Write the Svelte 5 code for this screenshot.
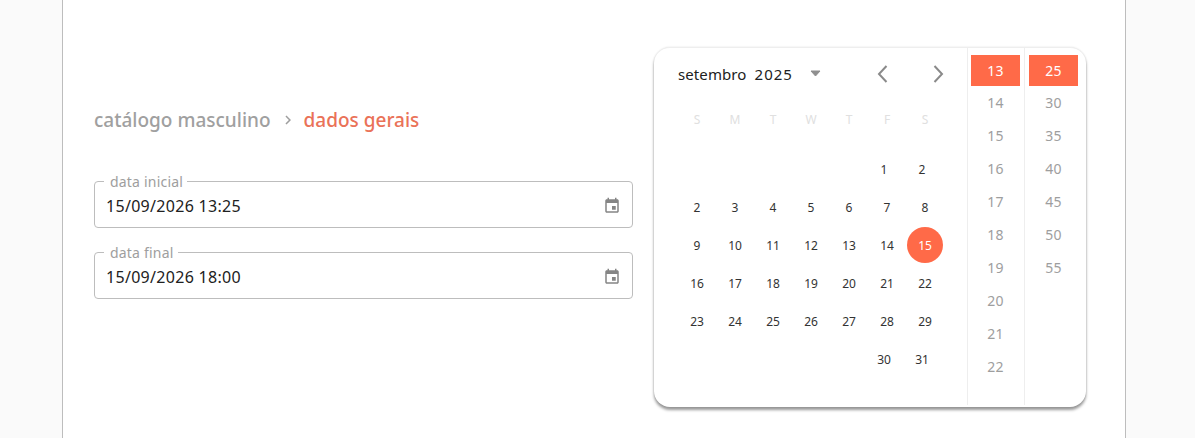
<script>
  const weekdays = ['S', 'M', 'T', 'W', 'T', 'F', 'S']
  const rows = [
    { shifted: true, days: ['', '', '', '', '', 1, 2] },
    { days: [2, 3, 4, 5, 6, 7, 8] },
    { days: [9, 10, 11, 12, 13, 14, 15] },
    { days: [16, 17, 18, 19, 20, 21, 22] },
    { days: [23, 24, 25, 26, 27, 28, 29] },
    { shifted: true, days: ['', '', '', '', '', 30, 31] }
  ]
  const hours = [13, 14, 15, 16, 17, 18, 19, 20, 21, 22]
  const minutes = [25, 30, 35, 40, 45, 50, 55]
  const fields = [
    { label: 'data inicial', value: '15/09/2026 13:25' },
    { label: 'data final', value: '15/09/2026 18:00' }
  ]
</script>

<div class="page">
  <div class="sheet">
    <div class="form">
      <div class="crumbs">
        <span>catálogo masculino</span>
        <svg class="sep" viewBox="0 0 24 24" width="18" height="18"><path d="M10 6 8.6 7.4 13.2 12l-4.6 4.6L10 18l6-6z" /></svg>
        <span class="current">dados gerais</span>
      </div>
      {#each fields as field}
        <fieldset class="field">
          <legend>{field.label}</legend>
          <span class="value">{field.value}</span>
          <svg class="cal" viewBox="0 0 24 24" width="18" height="18"><path d="M17 12h-5v5h5v-5zM16 1v2H8V1H6v2H5c-1.11 0-1.99.9-1.99 2L3 19c0 1.1.89 2 2 2h14c1.1 0 2-.9 2-2V5c0-1.1-.9-2-2-2h-1V1h-2zm3 18H5V8h14v11z" /></svg>
        </fieldset>
      {/each}
    </div>

    <div class="picker">
      <div class="month">
        <div class="head">
          <span class="title">setembro</span>
          <span class="title year">2025</span>
          <svg class="caret" viewBox="0 0 11 7" width="11" height="7"><path d="M1 1h9L5.500 6z" /></svg>
          <svg class="prev" viewBox="0 0 24 24" width="24" height="24"><path d="M16.500 4 9 12l7.500 8" /></svg>
          <svg class="next" viewBox="0 0 24 24" width="24" height="24"><path d="M7.500 4 15 12l-7.500 8" /></svg>
        </div>
        <div class="row labels">
          {#each weekdays as d}
            <span class="cell">{d}</span>
          {/each}
        </div>
        {#each rows as row}
          <div class="row" class:shifted={row.shifted}>
            {#each row.days as d}
              <span class="cell" class:selected={d === 15}>{d}</span>
            {/each}
          </div>
        {/each}
      </div>
      <div class="col hours">
        {#each hours as h, i}
          <span class="time" class:on={i === 0}>{h}</span>
        {/each}
      </div>
      <div class="col minutes">
        {#each minutes as m, i}
          <span class="time" class:on={i === 0}>{m}</span>
        {/each}
      </div>
    </div>
  </div>
</div>

<style>
  :global(body) {
    background: #fafafa;
  }
  .page {
    height: 438px;
    overflow: hidden;
    padding: 0 69px 0 62px;
    font-family: "Noto Sans", "Open Sans", sans-serif;
  }
  .sheet {
    box-sizing: border-box;
    height: 438px;
    width: 1064px;
    display: flex;
    align-items: flex-start;
    padding: 47px 39px 0 31px;
    background: #fff;
    border-left: 1px solid #bdbdbd;
    border-right: 1px solid #bdbdbd;
  }
  .form {
    width: 539px;
    margin-right: 21px;
    padding-top: 58px;
  }
  .crumbs {
    display: flex;
    align-items: center;
    height: 29px;
    margin-bottom: 41px;
    font-size: 19px;
    font-weight: 500;
    color: #a0a0a0;
  }
  .sep {
    margin: 0 7px 0 8px;
    fill: #9e9e9e;
  }
  .current {
    color: #ea7258;
  }
  .field {
    box-sizing: border-box;
    height: 53px;
    margin: 0 0 18px;
    padding: 0 11px 4px;
    display: flex;
    align-items: center;
    justify-content: space-between;
    border: 1px solid #bdbdbd;
    border-radius: 4px;
  }
  legend {
    margin-left: -2px;
    padding: 0 4px 0 6px;
    font-size: 14px;
    line-height: 13px;
    letter-spacing: 0.2px;
    color: #9e9e9e;
  }
  .value {
    font-size: 16px;
    letter-spacing: 0.3px;
    color: #212121;
  }
  .cal {
    fill: #858585;
  }
  .picker {
    box-sizing: border-box;
    width: 432px;
    height: 360px;
    display: flex;
    background: #fff;
    border-radius: 16px;
    border-top: 1px solid #eee;
    box-shadow: 0 3px 3px rgba(0, 0, 0, 0.4), 0 0 2px rgba(0, 0, 0, 0.12);
  }
  .month {
    width: 313px;
    padding: 0 0 0 24px;
    box-sizing: border-box;
  }
  .head {
    display: flex;
    align-items: center;
    height: 52px;
    padding-bottom: 1px;
    box-sizing: border-box;
    font-size: 15px;
    color: #212121;
  }
  .title {
    letter-spacing: 0.1px;
  }
  .year {
    margin-left: 8px;
    letter-spacing: 1px;
  }
  .caret {
    margin-left: 17px;
    fill: #8f8f8f;
    stroke: #8f8f8f;
    stroke-linejoin: round;
  }
  .prev,
  .next {
    fill: none;
    stroke: #8a8a8a;
    stroke-width: 2;
  }
  .prev {
    margin-left: 49px;
  }
  .next {
    margin-left: 33px;
  }
  .row {
    display: grid;
    grid-template-columns: repeat(7, 38px);
    height: 38px;
    font-size: 12px;
    color: #333;
  }
  .shifted {
    margin-left: -3px;
  }
  .labels {
    color: #e0e0e0;
    height: 50px;
  }
  .labels .cell {
    height: 38px;
  }
  .cell {
    display: flex;
    align-items: center;
    justify-content: center;
  }
  .selected {
    width: 36px;
    height: 36px;
    margin: 1px;
    border-radius: 50%;
    background: #ff6a48;
    color: #fff;
  }
  .col {
    box-sizing: border-box;
    height: 357px;
    border-left: 1px solid #eee;
    display: flex;
    flex-direction: column;
  }
  .hours {
    width: 57px;
    padding: 7px 4px 0 3px;
  }
  .minutes {
    width: 62px;
    padding: 7px 8px 0 4px;
  }
  .time {
    flex: 0 0 33px;
    display: flex;
    align-items: center;
    justify-content: center;
    font-size: 14px;
    letter-spacing: 0.3px;
    color: #9e9e9e;
  }
  .time.on {
    flex-basis: 31px;
    background: #ff6a48;
    color: #fff;
  }
</style>
